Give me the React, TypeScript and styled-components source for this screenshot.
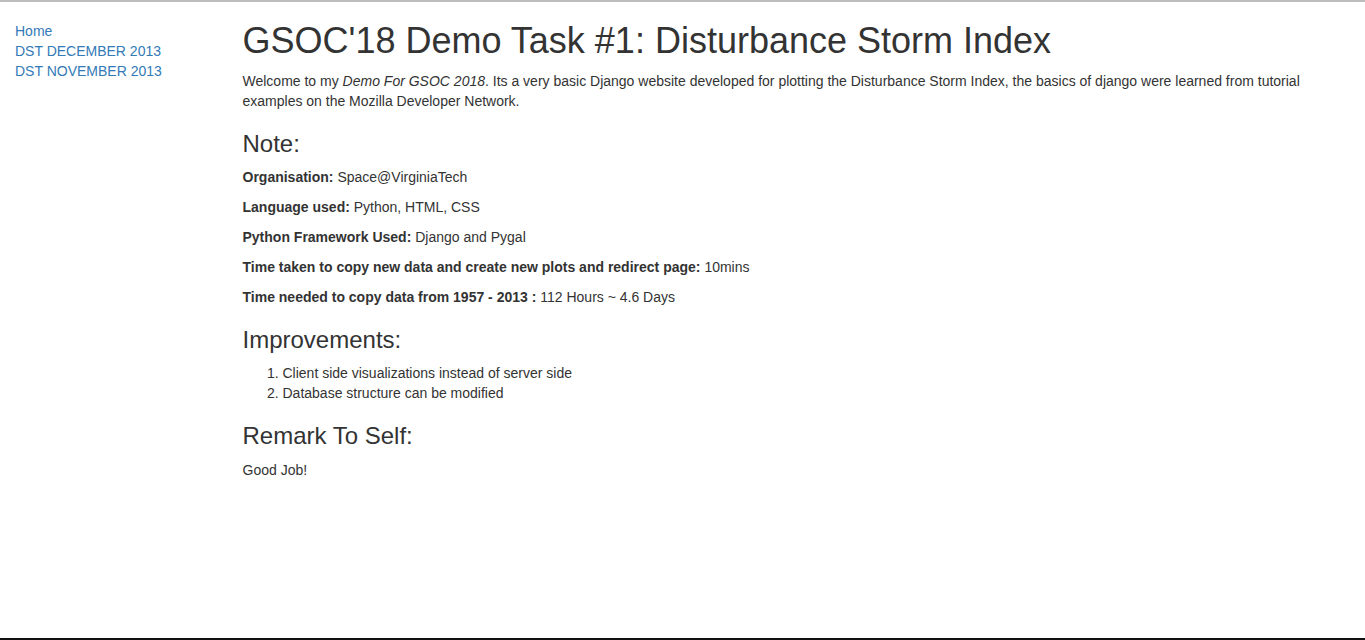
import React from 'react';
import styled, { createGlobalStyle } from 'styled-components';

const GlobalStyle = createGlobalStyle`
  html, body {
    margin: 0;
    padding: 0;
    background: #fff;
  }
  body {
    font-family: "Liberation Sans", Arial, Helvetica, sans-serif;
    font-size: 14px;
    line-height: 1.42857143;
    color: #333;
  }
  * {
    box-sizing: border-box;
  }
`;

const Frame = styled.div`
  height: 100vh;
  border-top: 2px solid #bdbdbd;
  border-bottom: 2px solid #111;
  overflow: hidden;
`;

const Container = styled.div`
  padding: 0 15px;
  margin-top: -1px;
`;

const Row = styled.div`
  display: flex;
  margin: 0 -15px;
`;

const Col = styled.div<{ span: number }>`
  width: ${({ span }) => (span / 12) * 100}%;
  padding: 0 15px;
`;

const SidebarNav = styled.ul`
  margin: 20px 0 0;
  padding: 0;
  list-style: none;
`;

const NavLink = styled.a`
  color: #337ab7;
  text-decoration: none;
`;

const Title = styled.h1`
  font-size: 36px;
  font-weight: 500;
  line-height: 1.1;
  margin: 20px 0 10px;
  color: #333;
`;

const Heading = styled.h3`
  font-size: 24px;
  font-weight: 500;
  line-height: 1.1;
  margin: 20px 0 10px;
  color: #333;
`;

const Para = styled.p`
  margin: 0 0 10px;
`;

const List = styled.ol`
  margin: 0 0 10px;
  padding-left: 40px;
`;

const notes: [string, string][] = [
  ['Organisation:', 'Space@VirginiaTech'],
  ['Language used:', 'Python, HTML, CSS'],
  ['Python Framework Used:', 'Django and Pygal'],
  ['Time taken to copy new data and create new plots and redirect page:', '10mins'],
  ['Time needed to copy data from 1957 - 2013 :', '112 Hours ~ 4.6 Days'],
];

export default function App() {
  return (
    <>
      <GlobalStyle />
      <Frame>
        <Container>
          <Row>
            <Col span={2}>
              <SidebarNav>
                <li><NavLink href="#">Home</NavLink></li>
                <li><NavLink href="#">DST DECEMBER 2013</NavLink></li>
                <li><NavLink href="#">DST NOVEMBER 2013</NavLink></li>
              </SidebarNav>
            </Col>
            <Col span={10}>
              <Title>GSOC'18 Demo Task #1: Disturbance Storm Index</Title>
              <Para>
                Welcome to my <em>Demo For GSOC 2018</em>. Its a very basic Django website developed for
                plotting the Disturbance Storm Index, the basics of django were learned from tutorial
                examples on the Mozilla Developer Network.
              </Para>
              <Heading>Note:</Heading>
              {notes.map(([label, value]) => (
                <Para key={label}>
                  <strong>{label}</strong> {value}
                </Para>
              ))}
              <Heading>Improvements:</Heading>
              <List>
                <li>Client side visualizations instead of server side</li>
                <li>Database structure can be modified</li>
              </List>
              <Heading>Remark To Self:</Heading>
              <Para>Good Job!</Para>
            </Col>
          </Row>
        </Container>
      </Frame>
    </>
  );
}
